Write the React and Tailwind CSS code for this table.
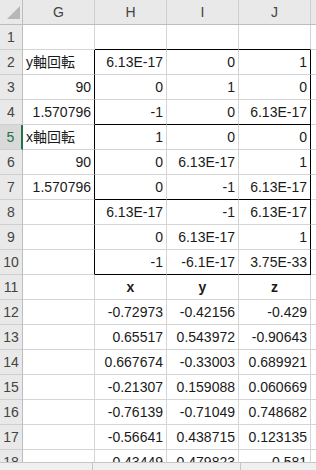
import React from "react";

const COLS = ["G", "H", "I", "J"];

// each row: [G, H, I, J]; G text starting with a letter is left-aligned
const ROWS = [
  ["", "", "", ""],
  ["y軸回転", "6.13E-17", "0", "1"],
  ["90", "0", "1", "0"],
  ["1.570796", "-1", "0", "6.13E-17"],
  ["x軸回転", "1", "0", "0"],
  ["90", "0", "6.13E-17", "1"],
  ["1.570796", "0", "-1", "6.13E-17"],
  ["", "6.13E-17", "-1", "6.13E-17"],
  ["", "0", "6.13E-17", "1"],
  ["", "-1", "-6.1E-17", "3.75E-33"],
  ["", "x", "y", "z"],
  ["", "-0.72973", "-0.42156", "-0.429"],
  ["", "0.65517", "0.543972", "-0.90643"],
  ["", "0.667674", "-0.33003", "0.689921"],
  ["", "-0.21307", "0.159088", "0.060669"],
  ["", "-0.76139", "-0.71049", "0.748682"],
  ["", "-0.56641", "0.438715", "0.123135"],
  ["", "-0.43449", "0.479823", "0.581"],
];

const inBox = (r) => r >= 2 && r <= 10;

const Cell = ({ row, col, value }) => {
  const matrix = col > 0 && inBox(row);
  const boxTop = col > 0 && (row === 1 || row === 4 || row === 7 || row === 10);
  const boxRight = inBox(row) && (col === 0 || col === 3);
  const isText = col === 0 && /^[xy]軸/.test(value);
  const isHeader = row === 11;

  return (
    <div
      className={
        "w-[72px] shrink-0 h-full flex items-center border-r border-b px-[3px] overflow-visible whitespace-nowrap " +
        (boxRight ? "border-r-black " : "border-r-[#d4d4d4] ") +
        (boxTop ? "border-b-black " : "border-b-[#d4d4d4] ") +
        (isHeader ? "justify-center font-bold " : isText ? "justify-start " : "justify-end ") +
        (matrix ? "" : "")
      }
    >
      {value}
    </div>
  );
};

export default function App() {
  return (
    <div
      className="w-[316px] h-[470px] overflow-hidden bg-white text-[14px] text-[#1a1a1a] flex flex-col"
      style={{ fontFamily: '"Liberation Sans", "Noto Sans CJK JP", sans-serif' }}
    >
      <div className="h-[462px] overflow-hidden flex flex-col">
        {/* column headers */}
        <div className="h-[25px] shrink-0 flex bg-[#e9e9e9] text-[#444] border-b border-[#bdbdbd]">
          <div className="w-[23px] shrink-0 h-full border-r border-[#bdbdbd] relative">
            <svg className="absolute left-0 top-0" width="22" height="24" viewBox="0 0 22 24">
              <polygon points="7,19 20,19 20,6" fill="#b7b7b7" />
            </svg>
          </div>
          {COLS.map((c) => (
            <div
              key={c}
              className="w-[72px] shrink-0 h-full flex items-center justify-center border-r border-[#cfcfcf]"
            >
              {c}
            </div>
          ))}
          <div className="flex-1" />
        </div>

        {ROWS.map((cells, i) => {
          const row = i + 1;
          const selected = row === 5;
          return (
            <div key={row} className="h-[25px] shrink-0 flex">
              <div
                className={
                  "w-[23px] shrink-0 h-full flex items-center justify-center border-b border-b-[#cfcfcf] " +
                  (selected
                    ? "bg-[#d9d9d9] text-[#217346] border-r-2 border-r-[#217346]"
                    : "bg-[#e9e9e9] text-[#444] border-r border-r-[#bdbdbd]")
                }
              >
                {row}
              </div>
              {cells.map((v, c) => (
                <Cell key={c} row={row} col={c} value={v} />
              ))}
              <div className="flex-1 h-full border-b border-[#d4d4d4]" />
            </div>
          );
        })}
      </div>

      {/* horizontal scroll strip */}
      <div className="h-[8px] shrink-0 bg-[#f0f0f0] border-t border-[#c6c6c6] flex">
        <div className="w-[93px] shrink-0 border-r border-[#c6c6c6]" />
        <div className="w-[148px] shrink-0 border-r border-[#c6c6c6]" />
        <div className="flex-1" />
      </div>
    </div>
  );
}
